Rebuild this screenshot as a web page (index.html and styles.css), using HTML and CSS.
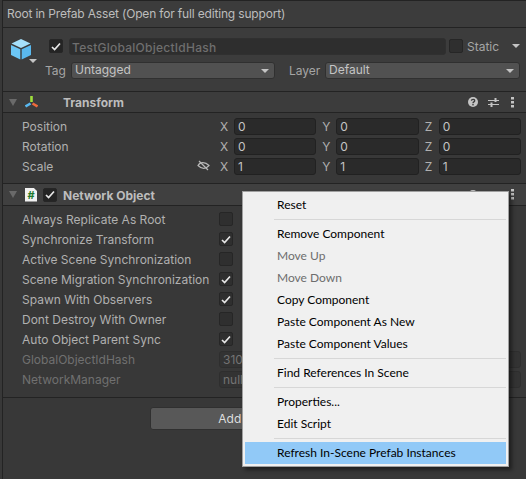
FILE: index.html
```html
<!DOCTYPE html>
<html lang="en">
  <head>
    <meta charset="UTF-8" />
    <title>Inspector</title>
    <link rel="stylesheet" href="styles.css">
  </head>
  <body>
    <div class="inspector">
      <div class="prefab-note">Root in Prefab Asset (Open for full editing support)</div>

      <!-- game object header -->
      <section class="go-header">
        <div class="go-icon">
          <svg width="20" height="21" viewBox="0 0 20 21">
            <path d="M10 0 L19.5 4.5 L10 9 L0.5 4.5 Z" fill="#a5e0fb"/>
            <path d="M0 6 L9.3 10.3 V20.5 L0 16 Z" fill="#6cc6f5"/>
            <path d="M20 6 L10.7 10.3 V20.5 L20 16 Z" fill="#5ab9ee"/>
          </svg>
          <span class="tri small"></span>
        </div>
        <div class="go-rows">
          <div class="go-row name-row">
            <span class="check on dark"><svg width="10" height="9" viewBox="0 0 10 9"><path d="M1 5 L3.6 7.5 L9 1.5" fill="none" stroke="#e8e8e8" stroke-width="1.7"/></svg></span>
            <div class="name-field">TestGlobalObjectIdHash</div>
            <span class="check"></span>
            <span class="static-label">Static</span>
            <span class="tri static-tri"></span>
          </div>
          <div class="go-row tag-row">
            <span class="tag-label">Tag</span>
            <div class="select tag-select"><span class="select-text">Untagged</span><span class="tri"></span></div>
            <span class="layer-label">Layer</span>
            <div class="select layer-select"><span class="select-text">Default</span><span class="tri"></span></div>
          </div>
        </div>
      </section>

      <!-- transform -->
      <section class="comp-header">
        <span class="fold"></span>
        <svg class="comp-icon" width="13" height="12" viewBox="0 0 13 12">
          <path d="M6.5 0 V6" stroke="#9fe03c" stroke-width="2.6"/>
          <path d="M5.5 7.5 L0.5 10.5" stroke="#58b8f0" stroke-width="2.6"/>
          <path d="M7.5 7.5 L12.5 10.5" stroke="#ef6b3c" stroke-width="2.6"/>
        </svg>
        <span class="comp-title transform-title">Transform</span>
        <span class="comp-tools">
          <svg class="tool-help" width="10" height="10" viewBox="0 0 10 10"><circle cx="5" cy="5" r="5" fill="#c4c4c4"/><path d="M3.4 3.8 C3.4 1.8 6.7 1.8 6.7 3.7 C6.7 5 5 4.8 5 6.2" fill="none" stroke="#3c3c3c" stroke-width="1.3"/><rect x="4.3" y="7" width="1.4" height="1.4" fill="#3c3c3c"/></svg>
          <svg class="tool-sliders" width="11" height="11" viewBox="0 0 11 11"><path d="M0 3.5 H11 M0 7.5 H11" stroke="#c4c4c4" stroke-width="1"/><path d="M7.5 1 V5 M3.5 5.5 V10" stroke="#c4c4c4" stroke-width="2"/></svg>
          <svg width="3" height="11" viewBox="0 0 3 11"><path d="M0 0 H3 V2.5 H0 Z M0 4 H3 V6.5 H0 Z M0 8 H3 V10.5 H0 Z" fill="#c4c4c4"/></svg>
        </span>
      </section>
      <section class="comp-body transform-body">
        <div class="vec-row">
          <span class="vec-label">Position</span>
          <div class="vec">
            <span class="axis">X</span><div class="num">0</div>
            <span class="axis">Y</span><div class="num">0</div>
            <span class="axis">Z</span><div class="num">0</div>
          </div>
        </div>
        <div class="vec-row">
          <span class="vec-label">Rotation</span>
          <div class="vec">
            <span class="axis">X</span><div class="num">0</div>
            <span class="axis">Y</span><div class="num">0</div>
            <span class="axis">Z</span><div class="num">0</div>
          </div>
        </div>
        <div class="vec-row">
          <span class="vec-label">Scale</span>
          <svg class="unlink" width="13" height="11" viewBox="0 0 13 11"><path d="M1 5.5 C3 2 8 1.5 12 5.5 C9 9 5 9.5 1 5.5 Z" fill="none" stroke="#b8b8b8" stroke-width="1.2"/><path d="M2 1 L11 10" stroke="#b8b8b8" stroke-width="1.2"/></svg>
          <div class="vec">
            <span class="axis">X</span><div class="num">1</div>
            <span class="axis">Y</span><div class="num">1</div>
            <span class="axis">Z</span><div class="num">1</div>
          </div>
        </div>
      </section>

      <!-- network object -->
      <section class="comp-header net-header">
        <span class="fold"></span>
        <span class="script-icon">#</span>
        <span class="check on dark head-check"><svg width="10" height="9" viewBox="0 0 10 9"><path d="M1 5 L3.6 7.5 L9 1.5" fill="none" stroke="#e8e8e8" stroke-width="1.7"/></svg></span>
        <span class="comp-title">Network Object</span>
        <span class="comp-tools">
          <svg class="tool-help" width="10" height="10" viewBox="0 0 10 10"><circle cx="5" cy="5" r="5" fill="#c4c4c4"/></svg>
          <svg class="tool-sliders" width="11" height="11" viewBox="0 0 11 11"><path d="M0 3.5 H11 M0 7.5 H11" stroke="#c4c4c4" stroke-width="1"/></svg>
          <svg width="3" height="11" viewBox="0 0 3 11"><path d="M0 0 H3 V2.5 H0 Z M0 4 H3 V6.5 H0 Z M0 8 H3 V10.5 H0 Z" fill="#c4c4c4"/></svg>
        </span>
      </section>
      <section class="comp-body net-body">
        <div class="prop"><span class="prop-label">Always Replicate As Root</span><span class="check"></span></div>
        <div class="prop"><span class="prop-label">Synchronize Transform</span><span class="check on"><svg width="10" height="9" viewBox="0 0 10 9"><path d="M1 5 L3.6 7.5 L9 1.5" fill="none" stroke="#e8e8e8" stroke-width="1.7"/></svg></span></div>
        <div class="prop"><span class="prop-label">Active Scene Synchronization</span><span class="check"></span></div>
        <div class="prop"><span class="prop-label">Scene Migration Synchronization</span><span class="check on"><svg width="10" height="9" viewBox="0 0 10 9"><path d="M1 5 L3.6 7.5 L9 1.5" fill="none" stroke="#e8e8e8" stroke-width="1.7"/></svg></span></div>
        <div class="prop"><span class="prop-label">Spawn With Observers</span><span class="check on"><svg width="10" height="9" viewBox="0 0 10 9"><path d="M1 5 L3.6 7.5 L9 1.5" fill="none" stroke="#e8e8e8" stroke-width="1.7"/></svg></span></div>
        <div class="prop"><span class="prop-label">Dont Destroy With Owner</span><span class="check"></span></div>
        <div class="prop"><span class="prop-label">Auto Object Parent Sync</span><span class="check on"><svg width="10" height="9" viewBox="0 0 10 9"><path d="M1 5 L3.6 7.5 L9 1.5" fill="none" stroke="#e8e8e8" stroke-width="1.7"/></svg></span></div>
        <div class="prop disabled"><span class="prop-label">GlobalObjectIdHash</span><div class="wide-field">3101</div></div>
        <div class="prop disabled"><span class="prop-label">NetworkManager</span><div class="wide-field">null</div></div>
      </section>

      <div class="add-wrap"><button class="add-btn">Add Component</button></div>
    </div>

    <!-- context menu -->
    <div class="menu">
      <div class="menu-item">Reset</div>
      <div class="menu-sep"></div>
      <div class="menu-item">Remove Component</div>
      <div class="menu-item off">Move Up</div>
      <div class="menu-item off">Move Down</div>
      <div class="menu-item">Copy Component</div>
      <div class="menu-item">Paste Component As New</div>
      <div class="menu-item">Paste Component Values</div>
      <div class="menu-sep"></div>
      <div class="menu-item">Find References In Scene</div>
      <div class="menu-sep"></div>
      <div class="menu-item">Properties...</div>
      <div class="menu-item">Edit Script</div>
      <div class="menu-sep"></div>
      <div class="menu-item active">Refresh In-Scene Prefab Instances</div>
    </div>
  </body>
</html>
```

FILE: styles.css
```css
html,
body {
  margin: 0;
  padding: 0;
}
body {
  width: 526px;
  height: 479px;
  overflow: hidden;
  position: relative;
  background-color: #383838;
  font-family: Inter, "Liberation Sans", sans-serif;
  font-size: 12px;
  color: #bdbdbd;
}

.inspector {
  height: 479px;
  margin-left: 2px;
  border-left: 1px solid #232323;
  border-top: 1px solid #232323;
  box-sizing: border-box;
}

.prefab-note {
  height: 26px;
  line-height: 26px;
  padding-left: 4px;
  background-color: #3c3c3c;
  border-bottom: 1px solid #232323;
  letter-spacing: -0.17px;
}

.go-header {
  display: flex;
  height: 64px;
  background-color: #3c3c3c;
  border-bottom: 1px solid #232323;
  box-sizing: border-box;
  padding-top: 9px;
  padding-left: 8px;
}
.go-icon {
  width: 32px;
  position: relative;
  padding-top: 2px;
}
.go-icon .small {
  position: absolute;
  left: 18px;
  top: 22px;
}
.go-rows {
  flex: 1;
}
.go-row {
  display: flex;
  align-items: center;
}
.name-row {
  height: 18px;
  padding-left: 6px;
}
.name-field {
  width: 377px;
  height: 17px;
  line-height: 17px;
  margin-left: 6px;
  padding-left: 2px;
  box-sizing: border-box;
  background-color: #2e2e2e;
  border: 1px solid #303030;
  border-radius: 3px;
  color: #6f6f6f;
  font-weight: 500;
  letter-spacing: 0.25px;
}
.name-row .check:not(.on) {
  margin-left: 3px;
}
.static-label {
  margin-left: 4px;
  color: #a5a5a5;
}
.static-tri {
  margin-left: 13px;
}
.tag-row {
  height: 17px;
  margin-top: 7px;
  padding-left: 2px;
}
.tag-label,
.layer-label {
  color: #a5a5a5;
}
.tag-label {
  width: 26px;
}
.layer-label {
  margin-left: 14px;
  width: 36px;
}
.select {
  height: 17px;
  padding-left: 3px;
  box-sizing: border-box;
  background-color: #515151;
  border: 1px solid #303030;
  border-radius: 3px;
  display: flex;
  align-items: center;
  justify-content: space-between;
  padding-right: 5px;
  color: #c4c4c4;
}
.select-text {
  line-height: 14px;
  margin-top: -1px;
}
.tag-select {
  width: 204px;
}
.layer-select {
  width: 195px;
}

.tri {
  display: inline-block;
  width: 0;
  height: 0;
  border-left: 4px solid transparent;
  border-right: 4px solid transparent;
  border-top: 4px solid #c4c4c4;
}

.comp-header {
  display: flex;
  align-items: center;
  height: 21px;
  background-color: #3c3c3c;
  border-bottom: 1px solid #232323;
  box-sizing: border-box;
  padding-left: 6px;
}
.fold {
  width: 0;
  height: 0;
  border-left: 4px solid transparent;
  border-right: 4px solid transparent;
  border-top: 7px solid #6a6a6a;
}
.comp-icon {
  margin-left: 8px;
}
.comp-title {
  font-weight: 700;
  color: #bdbdbd;
  padding-top: 1px;
}
.transform-title {
  margin-left: 25px;
}
.comp-tools {
  margin-left: auto;
  display: flex;
  align-items: center;
  padding-right: 12px;
}
.comp-tools svg {
  display: block;
}
.tool-help {
  margin-right: 10px;
}
.tool-sliders {
  margin-right: 12px;
}

.transform-body {
  height: 71px;
  padding-top: 3px;
  box-sizing: border-box;
  border-bottom: 1px solid #232323;
}
.vec-row {
  display: flex;
  align-items: center;
  height: 20px;
  padding-left: 19px;
  position: relative;
}
.vec-label {
  color: #b0b0b0;
}
.unlink {
  position: absolute;
  left: 194px;
  top: 4px;
}
.vec {
  margin-left: auto;
  width: 301px;
  margin-right: 5px;
  display: flex;
  align-items: center;
}
.axis {
  width: 14px;
  color: #b0b0b0;
}
.num {
  flex: 1;
  height: 17px;
  line-height: 16px;
  padding-left: 3px;
  margin-right: 6px;
  box-sizing: border-box;
  background-color: #2a2a2a;
  border: 1px solid #212121;
  border-radius: 3px;
  color: #c4c4c4;
}
.num:last-child {
  margin-right: 0;
}

.net-header {
  height: 22px;
  background-color: #404040;
}
.script-icon {
  width: 12px;
  height: 14px;
  margin-left: 8px;
  background-color: #f2f2f2;
  color: #1e7a2e;
  font-weight: 700;
  font-size: 11px;
  line-height: 14px;
  text-align: center;
  clip-path: polygon(0 0, 70% 0, 100% 25%, 100% 100%, 0 100%);
}
.head-check {
  margin-left: 6px;
}
.net-header .comp-title {
  margin-left: 6px;
}

.net-body {
  padding-top: 3px;
  height: 192px;
  box-sizing: border-box;
  border-bottom: 1px solid #232323;
}
.prop {
  display: flex;
  align-items: center;
  height: 20px;
  padding-left: 19px;
  padding-right: 5px;
}
.prop-label {
  width: 197px;
  flex-shrink: 0;
  color: #b0b0b0;
}
.prop.disabled .prop-label {
  color: #707070;
}
.wide-field {
  flex: 1;
  height: 17px;
  line-height: 16px;
  padding-left: 3px;
  box-sizing: border-box;
  border: 1px solid #2e2e2e;
  background-color: #333333;
  border-radius: 3px;
  color: #737373;
}

.check {
  width: 14px;
  height: 14px;
  flex-shrink: 0;
  box-sizing: border-box;
  display: inline-flex;
  align-items: center;
  justify-content: center;
  background-color: #2f2f2f;
  border: 1px solid #262626;
  border-radius: 2px;
}
.check.dark {
  background-color: #242424;
}

.add-wrap {
  display: flex;
  justify-content: center;
  padding-top: 9px;
}
.add-btn {
  width: 229px;
  height: 23px;
  background-color: #585858;
  border: 1px solid #303030;
  border-radius: 3px;
  color: #dedede;
  font-family: inherit;
  font-size: 12px;
}

/* menu sits on top of the inspector */
.menu {
  position: absolute;
  left: 242px;
  top: 191px;
  width: 267px;
  box-sizing: border-box;
  padding: 2px;
  background-color: #f0f0f0;
  border: 1px solid #a0a0a0;
  box-shadow: 3px 3px 4px rgba(0, 0, 0, 0.45);
  font-family: Lato, "Open Sans", sans-serif;
  font-size: 12px;
  color: #000;
}
.menu-item {
  height: 22px;
  line-height: 22px;
  padding-left: 32px;
}
.menu-item.off {
  color: #6d6d6d;
}
.menu-item.active {
  background-color: #91c9f7;
}
.menu-sep {
  height: 1px;
  margin: 3px 0 3px 29px;
  background-color: #d7d7d7;
}
```
